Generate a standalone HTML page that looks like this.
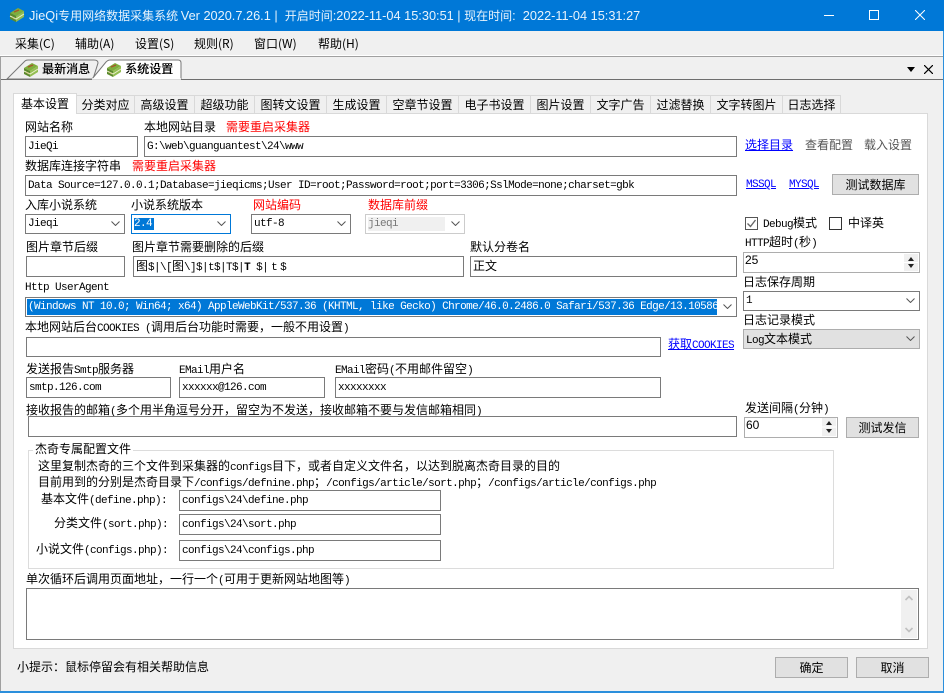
<!DOCTYPE html>
<html lang="zh"><head><meta charset="utf-8"><title>JieQi</title>
<style>
*{box-sizing:border-box;margin:0;padding:0}
html,body{width:944px;height:693px;overflow:hidden;background:#f0f0f0}
body{position:relative;font:12px/14px "WenQuanYi Zen Hei","Noto Sans CJK SC",sans-serif;color:#000}
.a,.l,.i,.s,.b,.t{position:absolute;white-space:nowrap}
.l{height:14px}
.r{color:#f00}
u{color:#00f}
.m,.i,.s{font-family:"Liberation Mono","WenQuanYi Zen Hei",monospace}
.m{font-size:11px;letter-spacing:-.6px}
.i{background:#fff;border:1px solid #7a7a7a;font-size:11px;letter-spacing:-.6px;padding:1px 2px 0;line-height:19px;overflow:hidden}
.s{background:#fff;border:1px solid #7a7a7a;font-size:11px;letter-spacing:-.6px;padding:2px 2px 0;line-height:15px}
.s svg{position:absolute;right:4px;top:6px}
.b{background:#e1e1e1;border:1px solid #adadad;text-align:center;line-height:19px}
.t{top:95px;height:18px;border:1px solid #d9d9d9;border-bottom:0;background:#f0f0f0;text-align:center;line-height:18px}
.c{font-family:"WenQuanYi Zen Hei","Noto Sans CJK SC",sans-serif;font-size:12px;letter-spacing:0}
.y{font-family:"Noto Sans CJK SC",sans-serif}
.v{font:12.75px "Liberation Sans",sans-serif}
</style></head><body>
<svg width="0" height="0" style="position:absolute"><defs>
<symbol id="ch" viewBox="0 0 9 5"><polyline points="0.5,0.5 4.5,4.5 8.5,0.5" fill="none" stroke="#555" stroke-width="1"/></symbol>
<symbol id="bk" viewBox="0 0 16 16"><path d="M1 6 9 1 15 4 7 9Z" fill="#7fae3c"/><path d="M1 6 7 9V15L1 12Z" fill="#5b8a2c"/><path d="M7 9 15 4V10L7 15Z" fill="#93bd52"/><path d="M1 9 7 12 15 7" stroke="#e7efc8" fill="none"/><path d="M5 5 10 3" stroke="#a8552a" stroke-width="1.4"/><path d="M3 10 6 12" stroke="#d9c88a"/></symbol>
</defs></svg>

<!-- title bar -->
<div class="a" style="left:0;top:0;width:944px;height:31px;background:#0078d7"></div>
<svg class="a" style="left:9px;top:7px" width="16" height="16"><use href="#bk"/></svg>
<div class="l y" style="left:29px;top:8px;color:#e8f3fc;font-size:12px"><span class="v">JieQi</span>专用网络数据采集系统 <span class="v">Ver 2020.7.26.1 |&nbsp; </span>开启时间<span class="v">:2022-11-04 15:30:51 | </span>现在时间<span class="v">:&nbsp; 2022-11-04 15:31:27</span></div>
<div class="a" style="left:824px;top:15px;width:10px;height:1px;background:#fff"></div>
<div class="a" style="left:869px;top:10px;width:10px;height:10px;border:1px solid #fff"></div>
<svg class="a" style="left:915px;top:10px" width="10" height="10"><path d="M0 0 10 10M10 0 0 10" stroke="#fff"/></svg>

<!-- menu -->
<div class="l y" style="left:15px;top:37px">采集(C)</div>
<div class="l y" style="left:75px;top:37px">辅助(A)</div>
<div class="l y" style="left:135px;top:37px">设置(S)</div>
<div class="l y" style="left:194px;top:37px">规则(R)</div>
<div class="l y" style="left:254px;top:37px">窗口(W)</div>
<div class="l y" style="left:318px;top:37px">帮助(H)</div>

<!-- document tabs -->
<div class="a" style="left:0;top:55px;width:944px;height:1px;background:#fff"></div>
<div class="a" style="left:0;top:56px;width:944px;height:1px;background:#a0a0a0"></div>
<div class="a" style="left:0;top:79px;width:944px;height:1px;background:#6e6e6e"></div>
<div class="a" style="left:0;top:56px;width:1px;height:635px;background:#a0a0a0"></div>
<svg class="a" style="left:0;top:55px" width="190" height="26">
<path d="M7 24 25 6Q26 5 28 5H94Q98 5 98 8L93 24Z" fill="#f0f0f0" stroke="#777"/>
<path d="M92 24 106 7Q108 5 110 5H178Q181 5 181 8V24Z" fill="#fff" stroke="#777"/>
<path d="M92 24H181" stroke="#fff" stroke-width="1.5"/>
</svg>
<svg class="a" style="left:23px;top:62px" width="16" height="16"><use href="#bk"/></svg>
<svg class="a" style="left:106px;top:62px" width="16" height="16"><use href="#bk"/></svg>
<div class="l" style="left:42px;top:62px;text-shadow:.3px 0 0 #000">最新消息</div>
<div class="l" style="left:125px;top:62px;text-shadow:.4px 0 0 #000">系统设置</div>
<svg class="a" style="left:907px;top:67px" width="9" height="6"><path d="M0 0H8L4 5Z" fill="#000"/></svg>
<svg class="a" style="left:924px;top:65px" width="9" height="9"><path d="M0 0 9 9M9 0 0 9" stroke="#000" stroke-width="1.2"/></svg>

<!-- panel -->
<div class="a" style="left:13px;top:113px;width:915px;height:536px;background:#fff;border:1px solid #d9d9d9"></div>
<div class="t" style="left:76px;width:59px">分类对应</div>
<div class="t" style="left:134px;width:61px">高级设置</div>
<div class="t" style="left:194px;width:61px">超级功能</div>
<div class="t" style="left:254px;width:73px">图转文设置</div>
<div class="t" style="left:326px;width:61px">生成设置</div>
<div class="t" style="left:386px;width:73px">空章节设置</div>
<div class="t" style="left:458px;width:73px">电子书设置</div>
<div class="t" style="left:530px;width:61px">图片设置</div>
<div class="t" style="left:590px;width:61px">文字广告</div>
<div class="t" style="left:650px;width:61px">过滤替换</div>
<div class="t" style="left:710px;width:73px">文字转图片</div>
<div class="t" style="left:782px;width:59px">日志选择</div>
<div class="t" style="left:13px;top:93px;width:64px;height:21px;background:#fff;line-height:19px">基本设置</div>

<!-- row 1 -->
<div class="l" style="left:25px;top:120px">网站名称</div>
<div class="l" style="left:144px;top:120px">本地网站目录</div>
<div class="l r" style="left:226px;top:120px">需要重启采集器</div>
<div class="i" style="left:25px;top:136px;width:113px;height:21px">JieQi</div>
<div class="i" style="left:144px;top:136px;width:593px;height:21px">G:\web\guanguantest\24\www</div>
<div class="l" style="left:745px;top:138px"><u>选择目录</u></div>
<div class="l" style="left:805px;top:138px;color:#555">查看配置</div>
<div class="l" style="left:864px;top:138px;color:#555">载入设置</div>

<!-- row 2 -->
<div class="l" style="left:25px;top:159px">数据库连接字符串</div>
<div class="l r" style="left:132px;top:159px">需要重启采集器</div>
<div class="i" style="left:25px;top:175px;width:712px;height:21px">Data Source=127.0.0.1;Database=jieqicms;User ID=root;Password=root;port=3306;SslMode=none;charset=gbk</div>
<div class="l m" style="left:746px;top:178px"><u>MSSQL</u></div>
<div class="l m" style="left:789px;top:178px"><u>MYSQL</u></div>
<div class="b" style="left:832px;top:174px;width:87px;height:21px">测试数据库</div>

<!-- row 3 -->
<div class="l" style="left:25px;top:198px">入库小说系统</div>
<div class="l" style="left:131px;top:198px">小说系统版本</div>
<div class="l r" style="left:253px;top:198px">网站编码</div>
<div class="l r" style="left:368px;top:198px">数据库前缀</div>
<div class="s" style="left:25px;top:214px;width:100px;height:20px">Jieqi<svg width="9" height="5"><use href="#ch"/></svg></div>
<div class="s" style="left:131px;top:214px;width:100px;height:20px;border-color:#0078d7"><span style="background:#0078d7;color:#fff;padding-right:2px">2.4</span><svg width="9" height="5"><use href="#ch"/></svg></div>
<div class="s" style="left:251px;top:214px;width:100px;height:20px">utf-8<svg width="9" height="5"><use href="#ch"/></svg></div>
<div class="s" style="left:365px;top:214px;width:100px;height:20px;border-color:#ccc;color:#777"><span style="display:inline-block;width:77px;background:#f0f0f0;height:14px;line-height:14px">jieqi</span><svg width="9" height="5"><use href="#ch"/></svg></div>

<!-- checkboxes -->
<div class="a" style="left:745px;top:217px;width:13px;height:13px;border:1px solid #555"></div>
<svg class="a" style="left:746px;top:218px" width="11" height="11"><path d="M1.5 5.5 4.5 8.5 9.5 2" fill="none" stroke="#666" stroke-width="1.4"/></svg>
<div class="l m" style="left:763px;top:216px">Debug<span class="c">模式</span></div>
<div class="a" style="left:829px;top:217px;width:13px;height:13px;border:1px solid #333"></div>
<div class="l" style="left:848px;top:216px">中译英</div>

<!-- right column -->
<div class="l m" style="left:745px;top:235px">HTTP<span class="c">超时</span>(<span class="c">秒</span>)</div>
<div class="s" style="left:743px;top:252px;width:177px;height:21px;border-color:#adadad;font-family:'Liberation Sans';font-size:12px;letter-spacing:0;line-height:15px;padding:0 1px">25</div>
<div class="a" style="left:904px;top:254px;width:14px;height:17px;background:#f0f0f0"></div>
<svg class="a" style="left:904px;top:254px" width="14" height="17"><path d="M4 7H10L7 3Z M4 10H10L7 14Z" fill="#222"/><path d="M0 8.5H14" stroke="#fff"/></svg>
<div class="l" style="left:743px;top:275px">日志保存周期</div>
<div class="s" style="left:743px;top:291px;width:177px;height:20px">1<svg width="9" height="5"><use href="#ch"/></svg></div>
<div class="l" style="left:743px;top:313px">日志记录模式</div>
<div class="s" style="left:743px;top:329px;width:177px;height:20px;background:#e1e1e1;border-color:#adadad;padding-top:1px">Log<span class="c">文本模式</span><svg width="9" height="5"><use href="#ch"/></svg></div>

<!-- row 4 -->
<div class="l" style="left:26px;top:240px">图片章节后缀</div>
<div class="l" style="left:132px;top:240px">图片章节需要删除的后缀</div>
<div class="l" style="left:470px;top:240px">默认分卷名</div>
<div class="i" style="left:26px;top:256px;width:99px;height:21px"></div>
<div class="i" style="left:133px;top:256px;width:331px;height:21px;padding-top:0;line-height:18px"><span class="c">图</span>$|\[<span class="c">图</span>\]$|t$|T$|<b>T</b> $|<span style="margin-left:3px">t</span><span style="margin-left:3px">$</span></div>
<div class="i c" style="left:470px;top:256px;width:267px;height:21px;padding-top:0;line-height:18px">正文</div>

<!-- UA -->
<div class="l m" style="left:25px;top:281px">Http UserAgent</div>
<div class="s" style="left:25px;top:297px;width:712px;height:20px;padding:0 1px"><span style="display:inline-block;width:690px;height:16px;line-height:16px;background:#0078d7;color:#fff;overflow:hidden;vertical-align:top;margin-top:1px;padding-left:1px">(Windows NT 10.0; Win64; x64) AppleWebKit/537.36 (KHTML, like Gecko) Chrome/46.0.2486.0 Safari/537.36 Edge/13.10586</span><svg width="9" height="5"><use href="#ch"/></svg></div>

<!-- cookies -->
<div class="l" style="left:25px;top:320px">本地网站后台<span class="m">COOKIES (</span>调用后台功能时需要，一般不用设置<span class="m">)</span></div>
<div class="i" style="left:26px;top:337px;width:635px;height:20px"></div>
<div class="l" style="left:668px;top:337px"><u>获取<span class="m">COOKIES</span></u></div>

<!-- email -->
<div class="l" style="left:26px;top:362px">发送报告<span class="m">Smtp</span>服务器</div>
<div class="l" style="left:179px;top:362px"><span class="m">EMail</span>用户名</div>
<div class="l" style="left:335px;top:362px"><span class="m">EMail</span>密码<span class="m">(</span>不用邮件留空<span class="m">)</span></div>
<div class="i" style="left:26px;top:377px;width:145px;height:21px">smtp.126.com</div>
<div class="i" style="left:179px;top:377px;width:146px;height:21px">xxxxxx@126.com</div>
<div class="i" style="left:335px;top:377px;width:326px;height:21px">xxxxxxxx</div>
<div class="l" style="left:26px;top:403px">接收报告的邮箱<span class="m">(</span>多个用半角逗号分开，留空为不发送，接收邮箱不要与发信邮箱相同<span class="m">)</span></div>
<div class="i" style="left:28px;top:416px;width:709px;height:21px"></div>
<div class="l" style="left:745px;top:401px">发送间隔<span class="m">(</span>分钟<span class="m">)</span></div>
<div class="s" style="left:744px;top:417px;width:94px;height:21px;border-color:#adadad;font-family:'Liberation Sans';font-size:12px;letter-spacing:0;line-height:15px;padding:0 1px">60</div>
<div class="a" style="left:822px;top:418px;width:14px;height:18px;background:#f0f0f0"></div>
<svg class="a" style="left:822px;top:418px" width="14" height="18"><path d="M4 7H10L7 3Z M4 11H10L7 15Z" fill="#222"/><path d="M0 9H14" stroke="#fff"/></svg>
<div class="b" style="left:846px;top:417px;width:73px;height:21px">测试发信</div>

<!-- group -->
<div class="a" style="left:28px;top:450px;width:806px;height:119px;border:1px solid #dcdcdc"></div>
<div class="l" style="left:33px;top:442px;background:#fff;padding:0 2px">杰奇专属配置文件</div>
<div class="l" style="left:38px;top:459px">这里复制杰奇的三个文件到采集器的<span class="m">configs</span>目下，或者自定义文件名，以达到脱离杰奇目录的目的</div>
<div class="l" style="left:38px;top:475px">目前用到的分别是杰奇目录下<span class="m">/configs/defnine.php</span>；<span class="m">/configs/article/sort.php</span>；<span class="m">/configs/article/configs.php</span></div>
<div class="l" style="left:41px;top:492px">基本文件<span class="m">(define.php):</span></div>
<div class="l" style="left:54px;top:516px">分类文件<span class="m">(sort.php):</span></div>
<div class="l" style="left:36px;top:542px">小说文件<span class="m">(configs.php):</span></div>
<div class="i" style="left:179px;top:490px;width:262px;height:21px">configs\24\define.php</div>
<div class="i" style="left:179px;top:514px;width:262px;height:21px">configs\24\sort.php</div>
<div class="i" style="left:179px;top:540px;width:262px;height:21px">configs\24\configs.php</div>

<!-- textarea -->
<div class="l" style="left:26px;top:572px">单次循环后调用页面地址，一行一个<span class="m">(</span>可用于更新网站地图等<span class="m">)</span></div>
<div class="i" style="left:26px;top:588px;width:893px;height:52px"></div>
<div class="a" style="left:901px;top:590px;width:16px;height:48px;background:#f0f0f0"></div>
<svg class="a" style="left:901px;top:590px" width="16" height="48"><path d="M4.500 10 8 6.500 11.500 10M4.500 38 8 41.500 11.500 38" fill="none" stroke="#c0c0c0" stroke-width="1.600"/></svg>

<!-- bottom -->
<div class="l" style="left:17px;top:660px">小提示：鼠标停留会有相关帮助信息</div>
<div class="b" style="left:775px;top:657px;width:73px;height:21px">确定</div>
<div class="b" style="left:856px;top:657px;width:73px;height:21px">取消</div>
<div class="a" style="left:0;top:691px;width:944px;height:2px;background:#2b8fdc"></div>
<div class="a" style="left:943px;top:31px;width:1px;height:662px;background:#2b8fdc"></div>
</body></html>
